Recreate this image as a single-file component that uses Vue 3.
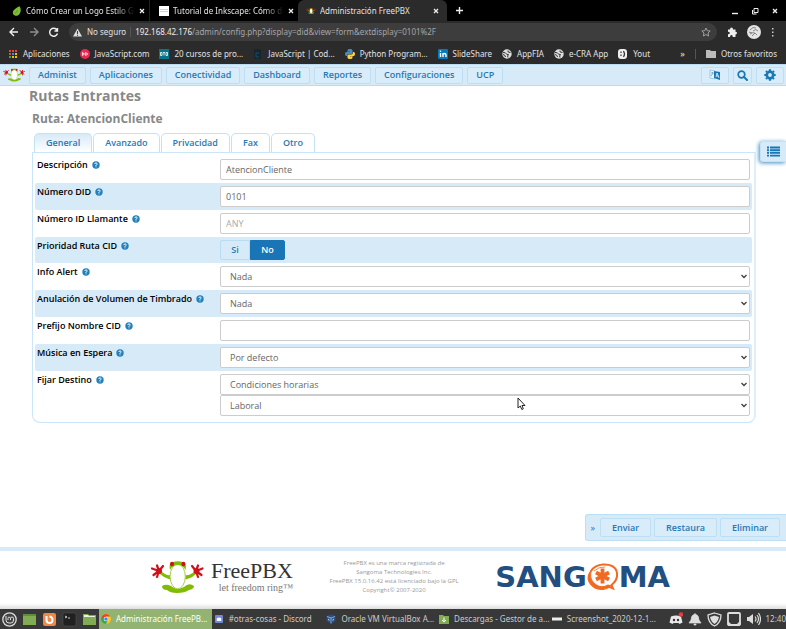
<script setup>
import { ref, reactive } from 'vue'

const tabs = [
  { icon: 'envato', title: 'Cómo Crear un Logo Estilo Ge', fade: true },
  { icon: 'doc', title: 'Tutorial de Inkscape: Cómo di', fade: true },
  { icon: 'frog', title: 'Administración FreePBX', active: true },
]
const bookmarks = [
  { icon: 'apps', text: 'Aplicaciones' },
  { icon: 'js', text: 'JavaScript.com' },
  { icon: 'btb', text: '20 cursos de pro...' },
  { icon: 'dark', text: 'JavaScript | Cod...' },
  { icon: 'python', text: 'Python Program...' },
  { icon: 'in', text: 'SlideShare' },
  { icon: 'globe', text: 'AppFIA' },
  { icon: 'globe', text: 'e-CRA App' },
  { icon: 'yout', text: 'Yout' },
]
const menu = ['Administ', 'Aplicaciones', 'Conectividad', 'Dashboard', 'Reportes', 'Configuraciones', 'UCP']
const sections = ['General', 'Avanzado', 'Privacidad', 'Fax', 'Otro']
const section = ref('General')
const priority = ref('No')
const fields = reactive([
  { id: 'desc', label: 'Descripción', type: 'text', value: 'AtencionCliente' },
  { id: 'did', label: 'Número DID', type: 'text', value: '0101' },
  { id: 'cid', label: 'Número ID Llamante', type: 'text', value: '', hint: 'ANY' },
  { id: 'prio', label: 'Prioridad Ruta CID', type: 'radio' },
  { id: 'alert', label: 'Info Alert', type: 'select', values: ['Nada'] },
  { id: 'ring', label: 'Anulación de Volumen de Timbrado', type: 'select', values: ['Nada'] },
  { id: 'prefix', label: 'Prefijo Nombre CID', type: 'text', value: '' },
  { id: 'moh', label: 'Música en Espera', type: 'select', values: ['Por defecto'] },
  { id: 'dest', label: 'Fijar Destino', type: 'select', values: ['Condiciones horarias', 'Laboral'] },
])
const tasks = [
  { icon: 'chrome', text: 'Administración FreePB...', active: true },
  { icon: 'discord', text: '#otras-cosas - Discord' },
  { icon: 'vbox', text: 'Oracle VM VirtualBox A...' },
  { icon: 'down', text: 'Descargas - Gestor de a...' },
  { icon: 'shot', text: 'Screenshot_2020-12-1...' },
]
</script>

<template>
  <div class="screen">
    <svg class="defs" width="0" height="0" aria-hidden="true">
      <symbol id="frog" viewBox="0 0 54 32">
        <path d="M11 10Q16 15 20.500 14L20 18.500Q14 17 10 13ZM45 10Q40 15 35 14L35.500 18.500Q42 17 46 13Z" fill="#82bc00" />
        <g fill="none" stroke="#d0111b" stroke-width="2.200" stroke-linecap="round">
          <path d="M9 10 2 7.500M9 10 7 4.500M9 10 13 5M9 10 3.500 14M9 10 7 16" />
          <path d="M46 10 52.500 7.500M46 10 48 4.500M46 10 42 5M46 10 51.500 14M46 10 48 16" />
        </g>
        <circle cx="9" cy="10" r="3" fill="#d0111b" /><circle cx="46.500" cy="10" r="3" fill="#d0111b" />
        <path d="M12 25Q16 22.500 21 25 27 30 34 26 39 21 44 25 44 28 39 29 35 32 27 32 20 32 17 29 12 29 12 25Z" fill="#82bc00" />
        <ellipse cx="27.700" cy="15.500" rx="7.600" ry="12.300" fill="#fff" stroke="#a5cf4d" stroke-width="1" />
        <path d="M20 9Q18.500 1 23 1 28-.5 32.500 1 37 1 35.500 9 33 4 27.700 4 22.500 4 20 9Z" fill="#82bc00" />
        <ellipse cx="22" cy="3" rx="2" ry="2.300" fill="#d0111b" /><ellipse cx="33.400" cy="3" rx="2" ry="2.300" fill="#d0111b" />
      </symbol>
      <symbol id="envato" viewBox="0 0 10 10"><path d="M7.500.3C9.800 3 8.800 9 5 9.800 1 10 0 6.500 1.500 4.500 3 2.800 5.500.8 7.500.3Z" fill="#7dbb38" /><path d="M3 7.500 5.500 4.500" stroke="#5a9427" /></symbol>
      <symbol id="doc" viewBox="0 0 10 10"><path fill="#fff" d="M0 0h10v10H0z" /><path d="M1 3.500h8M1 5.500h8" stroke="#bbb" stroke-width=".7" /></symbol>
      <symbol id="apps" viewBox="0 0 10 10"><path fill="#e84435" d="M1 1h2v2H1zM4 1h2v2H4zM7 1h2v2H7zM1 4h2v2H1z" /><path fill="#4286f4" d="M4 4h2v2H4z" /><path fill="#f7bb05" d="M7 4h2v2H7zM4 7h2v2H4zM7 7h2v2H7z" /><path fill="#35a853" d="M1 7h2v2H1z" /></symbol>
      <symbol id="js" viewBox="0 0 10 10"><circle cx="5" cy="5" r="5" fill="#ee2850" /><path d="M2.500 3.500v3L4.500 5ZM5.500 3.500 8 5 5.500 6.500Z" fill="none" stroke="#fff" stroke-width=".8" /></symbol>
      <symbol id="btb" viewBox="0 0 10 10"><path fill="#08758a" d="M0 0h10v10H0z" /><path d="M1.500 3.500v3h1.500v-3zM4 3.500h2M5 3.500v3M7 3.500v3h1.500v-3z" stroke="#fff" fill="none" stroke-width=".8" /></symbol>
      <symbol id="dark" viewBox="0 0 10 10"><path d="M1 0h7v10H1z" fill="#17252f" /><path d="M6 4H3v4h3" fill="none" stroke="#164f70" /></symbol>
      <symbol id="python" viewBox="0 0 10 10"><path d="M2.500 3V1.300Q2.500 0 5 0T7.500 1.300V4Q7.500 5 6 5H3.500Q2 5 2 7H1.300Q0 7 0 5T1.300 3H5V2.500Z" fill="#4b8cc0" /><path d="M7.500 7V8.700Q7.500 10 5 10T2.500 8.700V6.500Q2.500 5.500 4 5.500H6.500Q8 5.500 8 3H8.700Q10 3 10 5T8.700 7H5V7.500Z" fill="#ffd43b" /></symbol>
      <symbol id="in" viewBox="0 0 10 10"><rect width="10" height="10" rx="1" fill="#0878b8" /><path d="M2.500 4v4M5 8V4M5 6Q5 4.500 6.500 4.500T8 6V8" fill="none" stroke="#fff" stroke-width="1.400" /><circle cx="2.500" cy="2.300" r=".8" fill="#fff" /></symbol>
      <symbol id="globe" viewBox="0 0 10 10"><circle cx="5" cy="5" r="4.700" fill="#dedede" /><path d="M1 3.500Q4 3.500 4 4.500T6.500 5.500Q5 7 6 8.500M6 1.500Q5 3.500 8.500 3.500M1 5.500Q3.500 6 3.500 8" fill="none" stroke="#333" stroke-width="1" /></symbol>
      <symbol id="yout" viewBox="0 0 10 10"><rect width="9" height="10" rx="3" fill="#eee" /><path d="M3 2.500v1.500M3 5.500v1.500M5.500 2Q7.500 5 5.500 8" fill="none" stroke="#333" stroke-width="1.200" /></symbol>
      <symbol id="help" viewBox="0 0 8 8"><circle cx="4" cy="4" r="3.700" fill="#2280bd" /><path d="M2.700 3Q3 1.800 4.200 1.900 5.700 2.200 4.800 3.500L4 4.300V5M4 5.500v.8" fill="none" stroke="#fff" stroke-width="1" /></symbol>
      <symbol id="chrome" viewBox="0 0 10 10"><circle cx="5" cy="5" r="5" fill="#f7c724" /><path d="M.700 2.500A5 5 0 0 0 5 10L7 6Z" fill="#34a853" /><path d="M.700 2.500A5 5 0 0 1 9.300 2.500H5L3 6Z" fill="#e84435" /><circle cx="5" cy="5" r="2.300" fill="#fff" /><circle cx="5" cy="5" r="1.800" fill="#4285f4" /></symbol>
      <symbol id="discord" viewBox="0 0 10 10"><rect x="1" y="1" width="8" height="8" rx="1" fill="#7289da" /><path d="M2.500 6.500 3 4Q5 3 7 4L7.500 6.500Q5 7.500 2.500 6.500Z" fill="#fff" /></symbol>
      <symbol id="vbox" viewBox="0 0 10 10"><path d="M.500 2 5 .2 9.500 2V7L5 9.800 .500 7Z" fill="#294e83" /><path d="M1 2.500 5 4 9 2.500M5 4V9.500" fill="none" stroke="#a4bee0" stroke-width=".8" /><path d="M2 4.500 3.500 5.500V7L2 6ZM6.500 5.500 8 4.500V6L6.500 7Z" fill="#a4bee0" /></symbol>
      <symbol id="down" viewBox="0 0 10 10"><path d="M0 1H4L5 2h5v8H0Z" fill="#82ac54" /><path d="M5 3.500V8M3 6 5 8 7 6" fill="none" stroke="#fff" /></symbol>
      <symbol id="shot" viewBox="0 0 10 10"><path d="M0 3.500h10v3H0z" fill="#eee" /></symbol>
    </svg>

    <header class="browser">
      <div class="tab-strip">
        <div v-for="t in tabs" :key="t.title" class="tab" :class="{ active: t.active }">
          <svg class="ico"><use :href="'#' + t.icon" /></svg>
          <span class="tab-title" :class="{ fade: t.fade }">{{ t.title }}</span>
          <button class="plain" aria-label="Cerrar pestaña"><svg class="x" viewBox="0 0 6 6"><path d="m1 1 4 4M5 1 1 5" /></svg></button>
        </div>
        <button class="plain new-tab" aria-label="Nueva pestaña"><svg class="line" width="9" height="9" viewBox="0 0 9 9"><path d="M4.500 1v7M1 4.500h7" /></svg></button>
        <div class="win">
          <button class="plain" aria-label="Minimizar"><svg class="line" width="8" height="8" viewBox="0 0 8 8"><path d="M1 6.500h6" /></svg></button>
          <button class="plain" aria-label="Restaurar ventana"><svg class="line thin" width="8" height="8" viewBox="0 0 8 8"><path d="M3 1.500h4v4H3zM1.500 3v4h4" /></svg></button>
          <button class="plain" aria-label="Cerrar"><svg class="line" width="8" height="8" viewBox="0 0 8 8"><path d="m2 2 4 4M6 2 2 6" /></svg></button>
        </div>
      </div>
      <div class="toolbar">
        <button class="plain" aria-label="Atrás"><svg class="line" width="10" height="10" viewBox="0 0 10 10"><path d="M9 5H1M5 1 1 5l4 4" /></svg></button>
        <button class="plain dim" aria-label="Adelante"><svg class="line" width="10" height="10" viewBox="0 0 10 10"><path d="M1 5h8M5 1l4 4-4 4" /></svg></button>
        <button class="plain" aria-label="Recargar"><svg class="line" width="10" height="10" viewBox="0 0 10 10"><path d="M8 3A4 4 0 1 0 8.500 6.500M8.500 1v3h-3" /></svg></button>
        <div class="address">
          <svg width="9" height="9" viewBox="0 0 9 9"><path d="M4.500.5 9 8.500H0Z" fill="#ddd" /><path d="M4.500 3v3M4.500 6.800v1" stroke="#3b3b3b" /></svg>
          <span>No seguro</span><i class="sep"></i>
          <span class="url"><b>192.168.42.176</b>/admin/config.php?display=did&amp;view=form&amp;extdisplay=0101%2F</span>
          <svg width="10" height="10" viewBox="0 0 10 10"><path d="m5 1 1.200 2.700 3 .3L7 6l.6 3L5 7.500 2.400 9 3 6 .8 4l3-.3Z" fill="none" stroke="#aaa" stroke-width=".9" /></svg>
        </div>
        <svg width="10" height="10" viewBox="0 0 10 10"><path d="M1 2.500h2Q3 .5 4.500.5T6 2.500h2.500v2.200q1.500 0 1.500 1.300T8.500 7.500V10H5.800Q5.800 8 4.400 8T3 10H1V7.300q1.800 0 1.800-1.300T1 4.700Z" fill="#eee" /></svg>
        <svg width="14" height="14" viewBox="0 0 14 14"><circle cx="7" cy="7" r="7" fill="#e4e4e4" /><path d="M3 5q3-4 6-2M6 6q3-3 5 0M3 9q4-3 7 1M5 11l3-3M2 7l3 1" fill="none" stroke="#777" stroke-width=".9" /></svg>
        <button class="plain" aria-label="Menú"><svg width="4" height="10" viewBox="0 0 4 10"><path d="M1 1h1.500v1.500H1zM1 4.500h1.500V6H1zM1 8h1.500v1.500H1z" fill="#ccc" /></svg></button>
      </div>
      <div class="bookmarks">
        <a v-for="b in bookmarks" :key="b.text" href="#"><svg class="ico"><use :href="'#' + b.icon" /></svg>{{ b.text }}</a>
        <span class="more">»</span><i class="sep"></i>
        <a href="#"><svg class="ico" viewBox="0 0 10 10"><path d="M0 1h4l1 1h5v7H0Z" fill="#bbb" /></svg>Otros favoritos</a>
      </div>
    </header>

    <nav class="menu">
      <svg class="brand"><use href="#frog" /></svg>
      <button v-for="m in menu" :key="m" class="btn">{{ m }}</button>
      <span class="grow"></span>
      <button class="btn icon-btn wide" aria-label="Idioma"><svg width="12" height="12" viewBox="0 0 12 12"><path d="M1 1 6 2v8L1 9Z" fill="#eaf5fc" stroke="#91bedb" stroke-width=".8" /><path d="M2 4h3M3.500 3v2L2 7" stroke="#68a7ce" fill="none" stroke-width=".8" /><path d="M5 2 11 3v8L5 9Z" fill="#1877b5" /><path d="m7 8 1-4 2 5M7.500 7h2" stroke="#d7ebf8" fill="none" stroke-width=".9" /></svg></button>
      <button class="btn icon-btn" aria-label="Buscar"><svg width="11" height="11" viewBox="0 0 11 11"><circle cx="4.500" cy="4.500" r="3.300" fill="none" stroke="#1877b5" stroke-width="1.700" /><path d="m7 7 3 3" stroke="#1877b5" stroke-width="2" stroke-linecap="round" /></svg></button>
      <button class="btn icon-btn wide" aria-label="Ajustes"><svg width="12" height="12" viewBox="0 0 12 12"><circle cx="6" cy="6" r="3.200" fill="none" stroke="#1877b5" stroke-width="2.600" /><path d="M6 .3v2M6 9.700v2M.3 6h2M9.700 6h2M2 2l1 1M9 9l1 1M10 2 9 3M3 9l-1 1" stroke="#1877b5" stroke-width="2.200" /></svg></button>
    </nav>

    <main>
      <h1>Rutas Entrantes</h1>
      <h2>Ruta: AtencionCliente</h2>
      <div class="sections" role="tablist">
        <button v-for="s in sections" :key="s" role="tab" :aria-selected="section === s" :class="{ on: section === s }" @click="section = s">{{ s }}</button>
      </div>
      <form class="panel" @submit.prevent>
        <div v-for="f in fields" :key="f.id" class="row">
          <div class="name"><label :for="f.id">{{ f.label }}</label><svg width="8" height="8"><use href="#help" /></svg></div>
          <input v-if="f.type === 'text'" :id="f.id" v-model="f.value" class="field" type="text" :placeholder="f.hint">
          <div v-else-if="f.type === 'radio'" class="switch">
            <label v-for="o in ['Si', 'No']" :key="o" :class="{ on: priority === o }"><input :id="o === 'Si' ? f.id : f.id + '-no'" v-model="priority" type="radio" name="priority" :value="o">{{ o }}</label>
          </div>
          <div v-else>
            <div v-for="(v, i) in f.values" :key="v" class="pick">
              <select :id="i ? f.id + i : f.id" class="field" :aria-label="f.label"><option>{{ v }}</option></select>
              <svg width="6" height="5" viewBox="0 0 6 5"><path d="m.5 1 2.500 2.500L5.500 1" fill="none" stroke="#444" stroke-width="1.400" /></svg>
            </div>
          </div>
        </div>
      </form>
      <button class="side" aria-label="Lista"><svg width="13" height="11" viewBox="0 0 13 11"><path d="M0 1.500h2M3 1.500h10M0 4.200h2M3 4.200h10M0 6.900h2M3 6.900h10M0 9.600h2M3 9.600h10" stroke="#1877b5" stroke-width="1.900" /></svg></button>
      <div class="actions">
        <span>»</span><button class="btn">Enviar</button><button class="btn">Restaura</button><button class="btn">Eliminar</button>
      </div>
      <svg class="cursor" width="9" height="14" viewBox="0 0 9 14"><path d="M1 1v10l2.300-2 1.500 3.500 1.500-.7L5 8.500h3Z" fill="#fff" stroke="#222" /></svg>
    </main>

    <footer>
      <div class="freepbx">
        <svg width="54" height="32"><use href="#frog" /></svg>
        <div><div class="word">FreePBX</div><div class="motto">let freedom ring™</div></div>
      </div>
      <p>FreePBX es una marca registrada de<br>Sangoma Technologies Inc.<br>FreePBX 15.0.16.42 está licenciado bajo la GPL<br>Copyright© 2007-2020</p>
      <div class="sangoma">
        <span>SANG</span>
        <svg width="32" height="28" viewBox="0 0 32 28">
          <path d="M5 6Q-1 13 2 19 6 27 16 26.500 21 26 24 23L21 22Q14 26 8 21 1 15 5 6Z" fill="#f26a21" stroke="#f26a21" stroke-width="1" />
          <path d="M4 8Q8 2 16 1.500 27 1 29.500 8 32 16 24.500 22L26 25.500 20 23" fill="none" stroke="#f26a21" stroke-width="2" />
          <path d="M7 8Q12 3.500 18 4" fill="none" stroke="#f26a21" stroke-width=".8" />
          <path d="M15.500 5.500v15M9 9.500l13 7M22 9.500l-13 7" stroke="#f26a21" stroke-width="3.800" />
        </svg>
        <span>MA</span>
      </div>
    </footer>

    <div class="taskbar">
      <div class="launch">
        <svg width="15" height="15" viewBox="0 0 15 15"><circle cx="7.500" cy="7.500" r="6.700" fill="#444" stroke="#ddd" stroke-width="1.300" /><path d="M4 4v4q0 3 3 3h2q2.500 0 2.500-3V6.500q0-1.500-1.500-1.500T8.500 6.500V8M8.500 6.500Q8 5 7 5 6 5 6 6.500V8" fill="none" stroke="#ddd" /></svg>
        <svg width="15" height="15" viewBox="0 0 15 15"><path d="M1 2h13v11H1z" fill="#82ac54" /><path d="M1 2h13v2H1z" fill="#638b3b" /></svg>
        <svg width="15" height="15" viewBox="0 0 15 15"><rect x="1" y="1" width="13" height="13" rx="2" fill="#f08745" /><path d="M4.500 4v4a3 3 0 0 0 6 0Q10.500 5 7.500 4.500" fill="none" stroke="#fff" stroke-width="2" /></svg>
        <svg width="15" height="15" viewBox="0 0 15 15"><rect x="1" y="1" width="13" height="13" rx="2" fill="#202020" stroke="#555" stroke-width=".5" /><path d="m3 4 2 1-2 1M6 6h2" fill="none" stroke="#ddd" stroke-width=".9" /></svg>
        <svg width="15" height="15" viewBox="0 0 15 15"><path d="M1 2h5l1 1h7v10H1Z" fill="#82ac54" /><path d="M2 3h4l1 1h6v1H2Z" fill="#e8f2dc" /></svg>
      </div>
      <button v-for="t in tasks" :key="t.text" class="task" :class="{ current: t.active }"><svg class="ico"><use :href="'#' + t.icon" /></svg>{{ t.text }}</button>
      <div class="tray">
        <svg width="14" height="14" viewBox="0 0 14 14"><path d="M.5 10.500 2 4.500Q7 2.500 12 4.500l1.500 6-3 1.500-1-1H4.500l-1 1Z" fill="#e8e8e8" /><circle cx="5" cy="8" r="1.200" fill="#333" /><circle cx="9" cy="8" r="1.200" fill="#333" /><circle cx="12" cy="2.500" r="2.200" fill="#ee3b3b" /></svg>
        <svg width="14" height="14" viewBox="0 0 14 14"><path d="M7 1v1Q3 3 3 8L1 11h12l-2-3Q11 3 7 2M6 12h2v1H6z" fill="#ddd" stroke="#ddd" stroke-width=".7" /></svg>
        <svg width="15" height="15" viewBox="0 0 15 15"><path d="M7.500 1 14 3Q14 11 7.500 14 1 11 1 3Z" fill="none" stroke="#ddd" stroke-width="1.300" /><path d="M7.500 3.500 12 5Q11 10 7.500 12 4 10 3 5Z" fill="#ddd" /></svg>
        <svg width="14" height="14" viewBox="0 0 14 14"><rect x="1" y="1" width="12" height="12" rx="1" fill="none" stroke="#ddd" stroke-width="1.800" /><path d="M1 9.500 3.500 12 3 13H1zM13 9.500 10.500 12l.5 1h2z" fill="#ddd" stroke="#ddd" /></svg>
        <svg width="15" height="14" viewBox="0 0 15 14"><path d="M1 5h2l4-3v10L3 9H1Z" fill="#ddd" /><path d="M9 4.500q2 2.500 0 5M11 3q3 4 0 8M12.500 1q4 6 0 12" fill="none" stroke="#ddd" stroke-width="1.200" /></svg>
        <time>12:40</time>
      </div>
    </div>
  </div>
</template>

<style>
body { margin: 0; }
</style>

<style scoped>
* { box-sizing: border-box; }
.screen { min-height: 100vh; display: flex; flex-direction: column; background: #fff; font: 9px/12px "Open Sans", "Noto Sans", sans-serif; color: #111; overflow: hidden; }
.defs { position: absolute; }
svg { flex: none; display: block; }
button { font: inherit; color: inherit; margin: 0; cursor: pointer; white-space: nowrap; }
.plain { border: 0; padding: 0; background: none; display: flex; }
.ico { width: 10px; height: 10px; }
.browser { background: #2b2b2b; color: #e2e2e2; font: 8px/12px "Noto Sans", sans-serif; }
.tab-strip { height: 21px; background: #000; display: flex; align-items: center; }
.tab { width: 149px; height: 21px; padding: 0 4px 0 12px; display: flex; align-items: center; gap: 4px; }
.tab:nth-child(2) { border-left: 1px solid #222; padding-left: 9px; }
.tab.active { background: #2b2b2b; border-radius: 6px 6px 0 0; padding: 0 8px; }
.tab-title { flex: 1; min-width: 0; overflow: hidden; white-space: nowrap; }
.fade { mask-image: linear-gradient(90deg, #000 82%, transparent); }
.x { width: 6px; height: 6px; stroke: #eee; stroke-width: 1.3; }
.line { fill: none; stroke: #eee; stroke-width: 1.4; }
.thin { stroke-width: 1; }
.dim { opacity: .5; }
.new-tab { margin-left: 8px; }
.win { margin-left: auto; display: flex; gap: 12px; padding-right: 7px; }
.toolbar { height: 22px; display: flex; align-items: center; gap: 10px; padding: 0 11px 0 9px; }
.address { flex: 1; height: 18px; border-radius: 9px; background: #3d3d3d; display: flex; align-items: center; gap: 4px; padding: 0 6px 0 4px; }
.address svg:first-child { margin-right: 1px; }
.sep { width: 1px; height: 10px; background: #555; }
.url { flex: 1; color: #a5a5a5; }
.url b { color: #eee; font-weight: 400; }
.bookmarks { height: 21px; display: flex; align-items: center; gap: 10px; padding: 0 9px 0 8px; white-space: nowrap; }
.bookmarks a { color: inherit; text-decoration: none; display: flex; align-items: center; gap: 5px; }
.more { margin-left: auto; font-size: 9px; }
.menu { height: 22px; background: #d7eaf8; border-bottom: 1px solid #b9dcf2; border-top: 1px solid #b9dcf2; display: flex; align-items: center; gap: 4px; padding: 0 2px 0 3px; }
.brand { width: 22px; height: 14px; }
.btn { height: 17px; padding: 0 8px; border: 1px solid #bcdff5; border-radius: 2px; background: #d9ecf9; color: #2779b5; font-weight: 600; line-height: 14px; }
.icon-btn { padding: 0 3px; display: flex; align-items: center; justify-content: center; }
.wide { width: 28px; }
.grow { flex: 1; }
main { flex: 1; position: relative; display: flex; flex-direction: column; padding: 0 30px 6px 32px; }
h1 { margin: 0 -3px; font-size: 14px; line-height: 20px; color: #888; }
h2 { margin: 6px 0 7px; font-size: 12px; line-height: 14px; color: #888; }
.sections { display: flex; gap: 1px; padding-left: 2px; }
.sections button { height: 19px; padding: 0 11px; border: 1px solid #c5e2f5; border-bottom: 0; border-radius: 5px 5px 0 0; background: #fff; color: #2779b5; font-weight: 600; }
.sections .on { background: linear-gradient(#d7eaf8, #fff); }
.panel { border: 1px solid #c9e5f7; border-right: 2px solid #deeffb; border-radius: 0 0 8px 8px; padding: 3px 2px; }
.row { display: grid; grid-template-columns: 183px 1fr; padding: 3px 2px; border-radius: 2px; }
.row:nth-child(even) { background: #d7eaf8; }
.name { display: flex; align-items: center; align-self: start; gap: 4px; font-weight: 600; line-height: 12px; color: #000; }
.field { display: block; width: 100%; height: 21px; border: 1px solid #ccc; border-radius: 2px; padding: 0 5px; background: #fff; color: #666; font: inherit; outline: 0; }
.field::placeholder { color: #aaa; }
select.field { appearance: none; padding: 0 9px; }
.pick { display: grid; align-items: center; }
.pick > * { grid-area: 1 / 1; }
.pick svg { justify-self: end; margin-right: 3px; pointer-events: none; }
.switch { display: flex; height: 20px; }
.switch label { display: grid; place-items: center; width: 30px; border: 1px solid #b9dcf2; border-radius: 2px 0 0 2px; color: #2779b5; font-weight: 600; }
.switch .on { width: 35px; background: #1975b5; border-color: #1975b5; color: #fff; border-radius: 0 2px 2px 0; }
.switch input { position: absolute; opacity: 0; width: 1px; height: 1px; margin: 0; }
.side { position: absolute; right: 0; top: 55px; width: 26px; height: 21px; padding: 0 0 0 6px; border: 1px solid #c5e2f5; border-right: 0; border-radius: 3px 0 0 3px; background: #d7eaf8; box-shadow: -1px 1px 4px #3b8dc5; }
.cursor { position: absolute; left: 517px; top: 311px; }
.actions { margin: auto -30px 0 auto; height: 27px; display: flex; align-items: center; gap: 3px; padding: 0 6px 0 4px; background: #d7eaf8; border: 1px solid #bcdff5; border-right: 0; border-radius: 3px 0 0 3px; color: #2779b5; }
.actions span { margin-right: 2px; }
.actions .btn { height: 19px; padding: 0 11px; }
footer { height: 62px; border-top: 4px solid #d7eaf8; display: flex; align-items: center; padding: 0 116px 6px 150px; justify-content: space-between; background: linear-gradient(#fff 90%, #ddd); }
.freepbx { display: flex; gap: 7px; align-items: center; }
.word { font: 22px/22px "Liberation Serif", serif; color: #333; }
.motto { font: 10px/12px "Liberation Serif", serif; color: #777; text-align: right; }
footer p { margin: 0; text-align: center; font-size: 6px; line-height: 9px; color: #999; }
.sangoma { display: flex; align-items: center; color: #224e80; font: 700 29px/29px "DejaVu Sans", sans-serif; }
.taskbar { height: 20px; background: #383838; color: #ccc; display: flex; font: 8px/12px "Noto Sans", sans-serif; }
.launch { display: flex; align-items: center; gap: 5px; padding: 0 2px; }
.task { flex: 1 1 0; min-width: 0; border: 0; background: none; padding: 0 0 0 2px; display: flex; align-items: center; gap: 5px; overflow: hidden; }
.current { background: #92b372; color: #fff; }
.tray { display: flex; align-items: center; gap: 5px; padding-left: 6px; }
</style>
